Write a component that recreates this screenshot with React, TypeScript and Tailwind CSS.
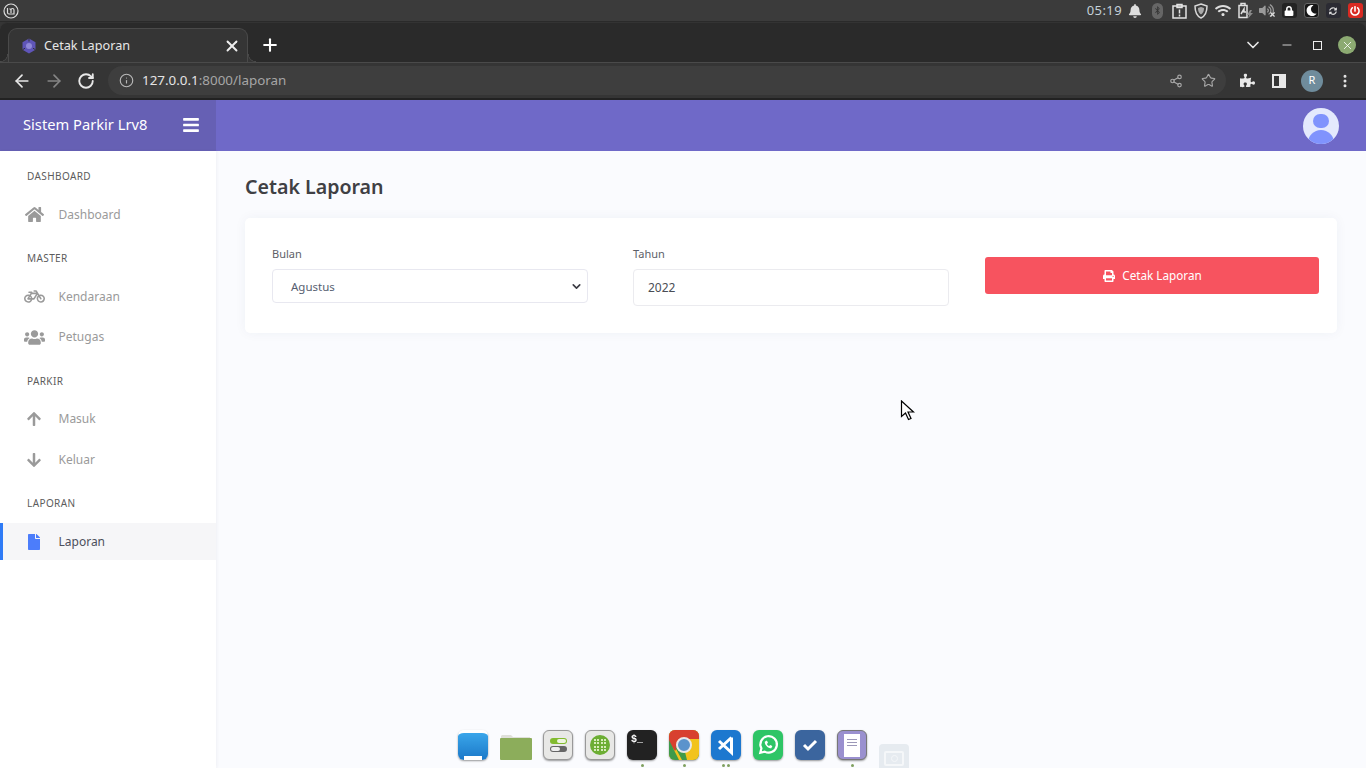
import { ArrowLeft, ArrowRight, ChevronDown, Info, Minus, MoreVertical, Plus, RotateCw, Share2, Star, X } from "lucide-react";
import { FaArrowDown, FaArrowUp, FaBars, FaBell, FaBicycle, FaBluetoothB, FaFile, FaHome, FaLock, FaMoon, FaPowerOff, FaPrint, FaPuzzlePiece, FaSyncAlt, FaUsers, FaVolumeUp, FaWifi } from "react-icons/fa";
import type { ReactNode } from "react";

const MENU = [
  { title: "DASHBOARD", items: [{ label: "Dashboard", icon: <FaHome className="w-[19px] h-[19px]" /> }] },
  {
    title: "MASTER",
    items: [
      { label: "Kendaraan", icon: <FaBicycle className="w-[21px] h-[21px]" /> },
      { label: "Petugas", icon: <FaUsers className="w-[21px] h-[21px]" /> },
    ],
  },
  {
    title: "PARKIR",
    items: [
      { label: "Masuk", icon: <FaArrowUp className="w-[16px] h-[16px]" /> },
      { label: "Keluar", icon: <FaArrowDown className="w-[16px] h-[16px]" /> },
    ],
  },
  { title: "LAPORAN", items: [{ label: "Laporan", icon: <FaFile className="w-[14px] h-[16px] text-[#4c7dfb]" />, active: true }] },
];

const Tray = ({ children }: { children: ReactNode }) => (
  <div className="w-[22px] h-[22px] flex items-center justify-center">{children}</div>
);

const TrayBox = ({ className, children }: { className: string; children: ReactNode }) => (
  <div className={`w-[15px] h-[15px] rounded-[3px] flex items-center justify-center ${className}`}>{children}</div>
);

const SystemBar = () => (
  <div className="h-[22px] bg-[#3b3b3b] flex items-center justify-between pl-[3px] border-b border-[#2a2a2a]">
    <svg width="16" height="16" viewBox="0 0 16 16" fill="none" stroke="#dcdcdc" strokeWidth="1.2">
      <circle cx="8" cy="8" r="7" />
      <path d="M4.500 5v4.500a1.500 1.500 0 0 0 1.500 1.500h5V7a1.500 1.500 0 0 0-3 0v3M8 7a1.500 1.500 0 0 0-1.500-1.200" />
    </svg>
    <div className="flex items-center text-[#dddddd]">
      <span className="text-[13px] tracking-[0.4px] text-[#c4d0d8] mr-[2px]">05:19</span>
      <Tray><FaBell className="w-[14px] h-[14px]" /></Tray>
      <Tray>
        <div className="w-[11px] h-[16px] rounded-full bg-[#666] flex items-center justify-center">
          <FaBluetoothB className="w-[9px] h-[9px] text-[#333]" />
        </div>
      </Tray>
      <Tray>
        <svg width="15" height="16" viewBox="0 0 15 16" fill="none" stroke="#e4e4e4" strokeWidth="1.500">
          <rect x="1" y="3" width="13" height="12" />
          <path d="M5 1.500h5v3H5zM7.500 6.500v4M7.500 11.500v2" />
        </svg>
      </Tray>
      <Tray>
        <svg width="16" height="16" viewBox="0 0 16 16" fill="none" stroke="#d8d8d8" strokeWidth="1.500">
          <path d="M8 1l6 2c0 6-1.500 10-6 12C3.500 13 2 9 2 3z" />
          <path d="M8 4l3 1c0 3-.7 5-3 6.500C5.700 10 5 8 5 5z" fill="#aaaaaa" stroke="none" />
        </svg>
      </Tray>
      <Tray><FaWifi className="w-[16px] h-[15px]" /></Tray>
      <Tray>
        <svg width="17" height="17" viewBox="0 0 17 17" fill="none" stroke="#e0e0e0" strokeWidth="1.500">
          <path d="M2 3.500h8v12H2zM4 1.500h4v2H4z" />
          <path d="M4 12l3-5v3h2" />
          <path d="M13 8l-3 5h2l-1 3.500 5-5.500h-2.500l1.500-3z" fill="#8a8a8a" stroke="none" />
        </svg>
      </Tray>
      <Tray>
        <div className="relative w-[17px] h-[15px]">
          <FaVolumeUp className="w-[15px] h-[15px] text-[#9a9a9a]" />
          <X className="absolute right-0 bottom-0 w-[7px] h-[7px] text-[#dddddd]" strokeWidth={4} />
        </div>
      </Tray>
      <Tray><TrayBox className="bg-[#232323]"><FaLock className="w-[10px] h-[10px] text-white" /></TrayBox></Tray>
      <Tray><TrayBox className="bg-[#161616] border border-[#666]"><FaMoon className="w-[11px] h-[11px] text-white" /></TrayBox></Tray>
      <Tray><TrayBox className="bg-[#2b2b33]"><FaSyncAlt className="w-[8px] h-[8px] text-[#dddddd]" /></TrayBox></Tray>
      <Tray><TrayBox className="bg-[#d92a22]"><FaPowerOff className="w-[10px] h-[10px] text-white" /></TrayBox></Tray>
    </div>
  </div>
);

const BrowserChrome = () => (
  <div className="bg-[#353535]">
    <div className="h-[40px] bg-[#2a2a2a] flex items-end rounded-t-[8px] border-t border-[#333] pl-[8px]">
      <div className="relative w-[240px] h-[34px] bg-[#353535] border border-b-0 border-[#4a4a4a] rounded-t-[9px] flex items-center pl-[12px] pr-[6px]">
        <span className="absolute -left-[9px] bottom-0 w-[8px] h-[8px] bg-[radial-gradient(circle_at_0_0,#2a2a2a_7px,#4a4a4a_7.5px,#353535_8.5px)]" />
        <span className="absolute -right-[9px] bottom-0 w-[8px] h-[8px] bg-[radial-gradient(circle_at_100%_0,#2a2a2a_7px,#4a4a4a_7.5px,#353535_8.5px)]" />
        <svg width="16" height="16" viewBox="0 0 16 16" fill="none">
          <path d="M8 .5l6.500 3.750v7.500L8 15.500l-6.500-3.750v-7.500z" fill="#5f55b8" />
          <circle cx="8" cy="8" r="3" fill="#8f88d8" />
          <path d="M8 .5v3M14.500 11.750L12 10.200M1.500 11.750L4 10.200" stroke="#353535" strokeWidth="1" />
        </svg>
        <span className="ml-[7px] text-[12.700px] text-[#e6e6e6] flex-1">Cetak Laporan</span>
        <X className="w-[18px] h-[18px] text-[#eeeeee]" strokeWidth={2.500} />
      </div>
      <div className="h-[34px] flex items-center ml-[12px]">
        <Plus className="w-[20px] h-[20px] text-white" strokeWidth={2.500} />
      </div>
      <div className="flex-1 h-[34px] flex items-center justify-end text-[#e8e8e8]">
        <ChevronDown className="w-[20px] h-[20px] mr-[17px]" strokeWidth={2} />
        <Minus className="w-[14px] h-[14px] mr-[19px]" strokeWidth={1.500} />
        <div className="w-[9px] h-[9px] border border-[#eeeeee] mr-[16px]" />
        <div className="w-[18px] h-[18px] rounded-full bg-[#8caa72] flex items-center justify-center mr-[10px]">
          <X className="w-[13px] h-[13px] text-white" strokeWidth={1.500} />
        </div>
      </div>
    </div>
    <div className="h-[38px] flex items-center border-t border-[#4a4a4a] border-b-[2px] border-b-[#222] pl-[12px] pr-[13px]">
      <ArrowLeft className="w-[20px] h-[20px] text-[#e8e8e8]" strokeWidth={2} />
      <ArrowRight className="w-[20px] h-[20px] text-[#858585] ml-[12px]" strokeWidth={2} />
      <RotateCw className="w-[18px] h-[18px] text-[#e8e8e8] ml-[13px]" strokeWidth={2.500} />
      <div className="h-[29px] w-[1118px] shrink-0 ml-[13px] rounded-full bg-[#3e3e3e] flex items-center pl-[11px] pr-[10px]">
        <Info className="w-[15px] h-[15px] text-[#b9b9b9]" strokeWidth={1.800} />
        <span className="ml-[8px] text-[13.400px] text-[#e4e4e4] flex-1">127.0.0.1<span className="text-[#a6a6a6]">:8000/laporan</span></span>
        <Share2 className="w-[14px] h-[14px] text-[#a8a8a8]" />
        <Star className="w-[15px] h-[15px] text-[#a8a8a8] ml-[18px]" strokeWidth={1.800} />
      </div>
      <FaPuzzlePiece className="w-[15px] h-[15px] text-[#e8e8e8] ml-[14px]" />
      <div className="w-[14px] h-[14px] border-[2px] border-[#e8e8e8] ml-[17px] flex justify-end">
        <div className="w-[5px] h-full bg-[#e8e8e8]" />
      </div>
      <div className="w-[22px] h-[22px] rounded-full bg-[#6f8c9c] text-white text-[11px] flex items-center justify-center ml-[15px]">R</div>
      <MoreVertical className="w-[16px] h-[16px] text-[#e8e8e8] ml-[14px]" strokeWidth={2.500} />
    </div>
  </div>
);

const Sidebar = () => (
  <aside className="w-[216px] shrink-0 bg-white shadow-[1px_0_3px_rgba(40,40,80,0.05)]">
    {MENU.map((group) => (
      <div key={group.title}>
        <div className="h-[45px] pl-[27px] pt-[18px] text-[10px] leading-[14px] tracking-[0.4px] text-[#5c5c5c]">{group.title}</div>
        <div className="flex flex-col gap-[3.500px]">
          {group.items.map((item) => (
            <div
              key={item.label}
              className={`flex items-center h-[37px] text-[12px] ${item.active ? "bg-[#f6f6f8] border-l-[3px] border-[#2f7bf6] text-[#4c4f5c]" : "border-l-[3px] border-transparent text-[#9a9a9a]"}`}
            >
              <div className="w-[22px] ml-[20px] flex justify-center">{item.icon}</div>
              <span className="ml-[13.500px]">{item.label}</span>
            </div>
          ))}
        </div>
      </div>
    ))}
  </aside>
);

const DockIcon = ({ children, className, dots = 0 }: { children: ReactNode; className: string; dots?: number }) => (
  <div className="relative w-[30px] h-[30px]">
    <div className={`w-full h-full rounded-[6px] shadow-[0_1px_2px_rgba(0,0,0,0.4)] overflow-hidden flex items-center justify-center ${className}`}>{children}</div>
    {dots > 0 && (
      <div className="absolute left-0 right-0 top-[34px] flex justify-center gap-[2px]">
        {Array.from({ length: dots }).map((_, i) => (
          <div key={i} className="w-[3px] h-[3px] rounded-full bg-[#7fa060]" />
        ))}
      </div>
    )}
  </div>
);

const Dock = () => (
  <div className="fixed left-[458px] top-[730px] flex gap-[12px]">
    <DockIcon className="rounded-[2px] bg-gradient-to-b from-[#3aa6ea] to-[#1b78c8] border-t-[3px] border-white items-end">
      <div className="w-[18px] h-[4px] bg-white" />
    </DockIcon>
    <div className="w-[33px] h-[28px] -mx-[1px] mt-[2px]">
      <svg width="33" height="28" viewBox="0 0 33 28">
        <path d="M3 3h9l2 2h17v4H2V4z" fill="#dfe0da" />
        <rect x="1" y="6" width="32" height="22" rx="1" fill="#8cad5b" />
      </svg>
    </div>
    <DockIcon className="bg-[#e8e8e6] border border-[#999] flex-col gap-[2px]">
      <div className="w-[17px] h-[6px] rounded-full bg-[#82bb2f] flex justify-end p-px"><div className="w-[9px] h-full rounded-full bg-[#eef5e0]" /></div>
      <div className="w-[17px] h-[6px] rounded-full bg-[#666] flex justify-start p-px"><div className="w-[9px] h-full rounded-full bg-[#eeeeee]" /></div>
    </DockIcon>
    <DockIcon className="bg-[#e8e8e6] border border-[#999]">
      <div className="w-[20px] h-[20px] rounded-full bg-[#6cae33] grid grid-cols-4 gap-px p-[4px]">
        {Array.from({ length: 16 }).map((_, i) => (
          <div key={i} className="bg-[#d6eab8] w-[2px] h-[2px]" />
        ))}
      </div>
    </DockIcon>
    <DockIcon dots={1} className="bg-[#222222] items-start justify-start">
      <span className="text-[10px] leading-[12px] font-bold text-white ml-[4px] mt-[4px] font-['Liberation_Mono',monospace]">$_</span>
    </DockIcon>
    <DockIcon dots={1} className="bg-[#3e9a4a]">
      <svg width="30" height="30" viewBox="0 0 30 30">
        <rect width="30" height="30" fill="#f2c31c" />
        <path d="M0 0h30v9H15L6 21 0 13z" fill="#d8402f" />
        <path d="M0 10l10 20H0zM6 17l7 13h5l-2-8z" fill="#3e9a4a" />
        <circle cx="15" cy="15" r="7" fill="#5b93cc" stroke="#e8e8e8" strokeWidth="2" />
      </svg>
    </DockIcon>
    <DockIcon dots={2} className="bg-[#1d78cf]">
      <svg width="22" height="22" viewBox="0 0 22 22" fill="none" stroke="#fff" strokeWidth="3">
        <path d="M16.500 3.500v15L4 7M4 15L16.500 3.500" />
      </svg>
    </DockIcon>
    <DockIcon className="bg-[#2ec566]">
      <svg width="22" height="22" viewBox="0 0 20 20" fill="none" stroke="#fff" strokeWidth="2">
        <path d="M3 17l1-4a7.500 7.500 0 1 1 3 3z" />
        <path d="M7 7c0 3 3 6 6 6l1-2-2-1-1 1c-1-.5-1.500-1-2-2l1-1-1-2z" fill="#fff" stroke="none" />
      </svg>
    </DockIcon>
    <DockIcon className="bg-[#3b659e]">
      <svg width="18" height="18" viewBox="0 0 18 18" fill="none" stroke="#fff" strokeWidth="3">
        <path d="M3 9l4 4 8-8" />
      </svg>
    </DockIcon>
    <DockIcon dots={1} className="bg-[#9a90cf] border border-[#777]">
      <div className="w-[16px] h-[23px] bg-white flex flex-col gap-[2px] pt-[5px] px-[3px]">
        <div className="h-[1px] bg-[#9c98b8]" />
        <div className="h-[1px] bg-[#9c98b8]" />
        <div className="h-[1px] bg-[#9c98b8]" />
      </div>
    </DockIcon>
    <div className="w-[30px] h-[30px] mt-[14px] rounded-[4px] bg-[#e6ebf0] flex items-start justify-center pt-[7px]">
      <div className="w-[20px] h-[15px] rounded-[2px] border-[2px] border-[#f5f7f9] flex items-center justify-center">
        <div className="w-[7px] h-[7px] rounded-full border border-[#f5f7f9]" />
      </div>
    </div>
  </div>
);

const Cursor = () => (
  <svg className="fixed left-[900px] top-[400px]" width="15" height="21" viewBox="0 0 15 21">
    <path d="M1.500 1v15.500l4-3.500 3 6.500 2.500-1-3-6.500h5.500z" fill="#fff" stroke="#000" strokeWidth="1.200" />
  </svg>
);

export default function App() {
  return (
    <div className="h-[768px] w-[1366px] overflow-hidden flex flex-col bg-[#fafbfe] font-['Noto_Sans',sans-serif]">
      <SystemBar />
      <BrowserChrome />
      <header className="h-[51px] flex shrink-0 bg-[#6f69c8]">
        <div className="w-[216px] bg-[#6660b4] flex items-center justify-between pl-[23px] pr-[17px] pb-[3px]">
          <span className="text-[14.700px] text-white">Sistem Parkir Lrv8</span>
          <FaBars className="w-[16px] h-[18px] mt-[2px] text-white" />
        </div>
        <div className="flex-1 flex items-center justify-end pr-[27px]">
          <div className="w-[36px] h-[36px] rounded-full bg-[#e4e9fd] overflow-hidden flex flex-col items-center">
            <div className="w-[16px] h-[16px] rounded-full bg-[#8093fd] mt-[6px]" />
            <div className="w-[26px] h-[16px] rounded-t-full bg-[#8093fd] mt-[2px]" />
          </div>
        </div>
      </header>
      <div className="flex flex-1 min-h-0">
        <Sidebar />
        <main className="flex-1 pt-[24px] pl-[29px] pr-[29px]">
          <h1 className="text-[19.600px] leading-[24px] font-semibold text-[#3f4044]">Cetak Laporan</h1>
          <div className="mt-[19px] h-[115px] bg-white rounded-[5px] shadow-[0_0_12px_rgba(40,50,90,0.05)] flex pl-[27px] pr-[18px] pt-[28px]">
            <div className="w-[316px]">
              <label className="block text-[11px] leading-[15px] text-[#5d6068]">Bulan</label>
              <div className="mt-[8px] h-[34px] border border-[#e8e8f0] rounded-[4px] flex items-center justify-between pl-[18px] pr-[4px] text-[11.500px] text-[#565e70] pt-px">
                <span>Agustus</span>
                <ChevronDown className="w-[13px] h-[13px] text-[#3c3c44]" strokeWidth={3} />
              </div>
            </div>
            <div className="w-[316px] ml-[45px]">
              <label className="block text-[11px] leading-[15px] text-[#5d6068]">Tahun</label>
              <div className="mt-[8px] h-[37px] border border-[#ebebef] rounded-[4px] flex items-center pl-[14px] text-[12px] text-[#4a4d55]">2022</div>
            </div>
            <button className="w-[334px] h-[37px] ml-[36px] mt-[11px] rounded-[3px] bg-[#f7535f] text-white text-[11.700px] flex items-center justify-center gap-[7px] pl-[1px]">
              <FaPrint className="w-[12px] h-[12px]" />
              Cetak Laporan
            </button>
          </div>
        </main>
      </div>
      <Dock />
      <Cursor />
    </div>
  );
}
